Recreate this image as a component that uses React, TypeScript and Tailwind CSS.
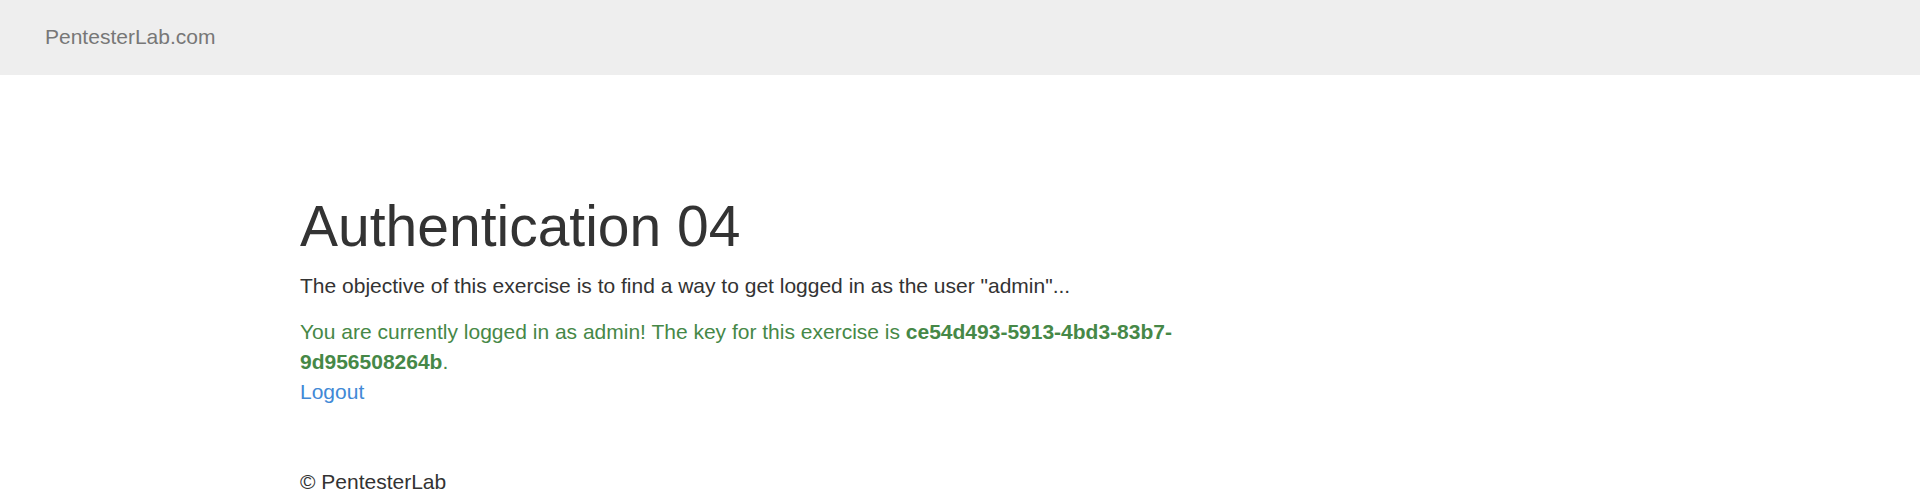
import React from 'react'

const App: React.FC = () => {
  return (
    <div className="min-h-screen bg-white text-[#333333] font-['Liberation_Sans',Arial,sans-serif]">
      {/* Navbar */}
      <nav className="h-[75px] bg-[#eeeeee] flex items-center px-[45px]">
        <a href="#" className="text-[21px] leading-none text-[#777777] pb-[2px]">
          PentesterLab.com
        </a>
      </nav>

      <div className="pl-[300px] w-[1190px]">
        <h1 className="mt-[120px] text-[57px] leading-[1.1] font-normal">Authentication 04</h1>
        <p className="mt-[13px] text-[21px] leading-[30px]">
          The objective of this exercise is to find a way to get logged in as the user "admin"...
        </p>
        <p className="mt-[16px] text-[21px] leading-[30px] text-[#468847]">
          You are currently logged in as admin! The key for this exercise is{' '}
          <b>ce54d493-5913-4bd3-83b7-9d956508264b</b>.
          <br />
          <a href="#" className="text-[#4189d6]">Logout</a>
        </p>
        <footer className="mt-[60px] text-[21px] leading-[30px]">© PentesterLab</footer>
      </div>
    </div>
  )
}

export default App
